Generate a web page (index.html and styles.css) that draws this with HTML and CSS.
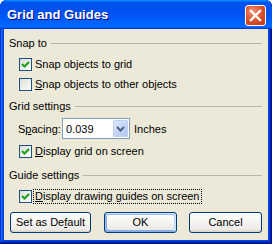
FILE: index.html
```html
<!DOCTYPE html>
<html>
<head>
<meta charset="utf-8">
<link rel="stylesheet" href="styles.css">
</head>
<body>
<div class="window">
  <div class="titlebar">
    <span class="title">Grid and Guides</span>
    <span class="close">
      <svg width="19" height="19" viewBox="0 0 19 19"><path d="M5 5 L14 14 M14 5 L5 14" stroke="#fff" stroke-width="2.4" stroke-linecap="square" fill="none"/></svg>
    </span>
  </div>
  <div class="client">
    <div class="group-head head1"><span>Snap to</span><i class="rule"></i></div>
    <div class="check-row row1"><span class="cb"><svg width="11" height="11" viewBox="0 0 11 11"><path d="M2 5 L4.5 7.5 L9 3" stroke="#21a121" stroke-width="2.2" fill="none"/></svg></span><span class="lbl">Snap objects to grid</span></div>
    <div class="check-row"><span class="cb"></span><span class="lbl"><u>S</u>nap objects to other objects</span></div>

    <div class="group-head head2"><span>Grid settings</span><i class="rule"></i></div>
    <div class="spacing-row">
      <span class="sp-label">S<u>p</u>acing:</span>
      <span class="combo"><span class="combo-val">0.039</span><span class="drop"><svg width="15" height="17" viewBox="0 0 15 17"><path d="M4 7 L7.5 10.5 L11 7" stroke="#4d6185" stroke-width="2" fill="none"/></svg></span></span>
      <span class="units">Inches</span>
    </div>
    <div class="check-row row3"><span class="cb"><svg width="11" height="11" viewBox="0 0 11 11"><path d="M2 5 L4.5 7.5 L9 3" stroke="#21a121" stroke-width="2.2" fill="none"/></svg></span><span class="lbl"><u>D</u>isplay grid on screen</span></div>

    <div class="group-head head3"><span>Guide settings</span><i class="rule"></i></div>
    <div class="check-row row4"><span class="cb"><svg width="11" height="11" viewBox="0 0 11 11"><path d="M2 5 L4.5 7.5 L9 3" stroke="#21a121" stroke-width="2.2" fill="none"/></svg></span><span class="lbl focus"><u>D</u>isplay drawing guides on screen</span></div>

    <div class="buttons">
      <span class="btn btn-default-set">Set as De<u>f</u>ault</span>
      <span class="btn btn-ok">OK</span>
      <span class="btn btn-cancel">Cancel</span>
    </div>
  </div>
</div>
</body>
</html>
```
FILE: styles.css
```css
html, body {
  margin: 0;
  padding: 0;
  background: #ffffff;
}
body {
  width: 272px;
  height: 244px;
  overflow: hidden;
  font-family: "Liberation Sans", Arial, sans-serif;
  font-size: 11px;
  color: #000;
}
.window {
  width: 272px;
  height: 244px;
  box-sizing: border-box;
  display: flex;
  flex-direction: column;
  background: #0843d9;
  border-radius: 7px 7px 0 0;
  box-shadow: inset -1px -1px #00138c, inset 1px 1px #0831d9, inset -2px -2px #001ea0, inset 2px 2px #166aee, inset -3px -3px #003bda, inset 3px 3px #0855dd;
}
.titlebar {
  height: 29px;
  flex: none;
  display: flex;
  align-items: flex-start;
  justify-content: space-between;
  padding: 0 6px 0 7px;
  border-radius: 7px 7px 0 0;
  background: linear-gradient(180deg, #0997ff, #0053ee 8%, #0050ee 40%, #0066ff 88%, #0066ff 93%, #005bff 95%, #003dd7 96%, #003dd7);
}
.title {
  margin-top: 7px;
  font-family: "Liberation Sans", Arial, sans-serif;
  font-weight: bold;
  font-size: 13px;
  line-height: 15px;
  color: #fff;
  text-shadow: 1px 1px #0f1089;
  letter-spacing: 0;
}
.close {
  margin-top: 5px;
  width: 19px;
  height: 19px;
  border: 1px solid #fff;
  border-radius: 3px;
  display: flex;
  background: radial-gradient(circle at 35% 30%, #f29a80 0, #e2613e 35%, #cf4420 70%, #b8361a 100%);
}
.close svg { display: block; }
.client {
  flex: 1;
  margin: 0 4px 4px 4px;
  background: #ece9d8;
  display: flex;
  flex-direction: column;
  padding: 0 6px 0 5px;
}
.group-head {
  height: 14px;
  display: flex;
  align-items: center;
  line-height: 14px;
}
.group-head span { white-space: nowrap; }
.rule {
  flex: 1;
  height: 0;
  border-top: 1px solid #b9b6a6;
  margin-left: 4px;
  margin-top: 1px;
}
.head1 { margin-top: 7px; }
.head2 { margin-top: 5px; }
.head3 { margin-top: 7px; }
.check-row {
  height: 20px;
  display: flex;
  align-items: center;
  margin-left: 10px;
}
.row1 { margin-top: 4px; }
.row3 { margin-top: 2px; }
.row4 { margin-top: 4px; }
.cb {
  width: 11px;
  height: 11px;
  border: 1px solid #1c5180;
  background: linear-gradient(135deg, #dcdcd7 0%, #ffffff 100%);
  flex: none;
  display: flex;
}
.cb svg { display: block; }
.lbl {
  margin-left: 1px;
  padding: 0 1px;
  line-height: 13px;
  white-space: nowrap;
  border: 1px solid transparent;
}
.lbl.focus {
  border: 1px dotted #000;
}
u { text-decoration: underline; text-underline-offset: 1px; }
.spacing-row {
  margin-top: 5px;
  height: 21px;
  display: flex;
  align-items: center;
  margin-left: 9px;
}
.sp-label { width: 44px; white-space: nowrap; }
.combo {
  width: 66px;
  height: 19px;
  border: 1px solid #7f9db9;
  background: #fff;
  display: flex;
  align-items: center;
}
.combo-val { flex: 1; padding-left: 3px; }
.drop {
  width: 15px;
  height: 17px;
  margin: 1px;
  border-radius: 2px;
  background: linear-gradient(135deg, #e4ebfe 0%, #c4d4f8 55%, #b3c7f2 100%);
  box-shadow: inset 0 0 0 1px #c0d0f6;
  display: flex;
}
.drop svg { display: block; }
.units { margin-left: 4px; }
.buttons {
  margin-top: 6px;
  display: flex;
  margin-left: 1px;
}
.btn {
  height: 19px;
  box-sizing: content-box;
  border: 1px solid #003c74;
  border-radius: 3px;
  background: linear-gradient(180deg, #ffffff, #ecebe6 86%, #d6d0c5);
  display: flex;
  align-items: center;
  justify-content: center;
  line-height: 13px;
}
.btn-default-set { width: 79px; }
.btn-ok {
  width: 71px;
  margin-left: 13px;
  box-shadow: inset -1px 1px #cee7ff, inset 1px 2px #98b8ea, inset -2px 2px #bcd4f6, inset 1px -1px #89ade4, inset 2px -2px #89ade4;
}
.btn-cancel { width: 71px; margin-left: 12px; }
```
